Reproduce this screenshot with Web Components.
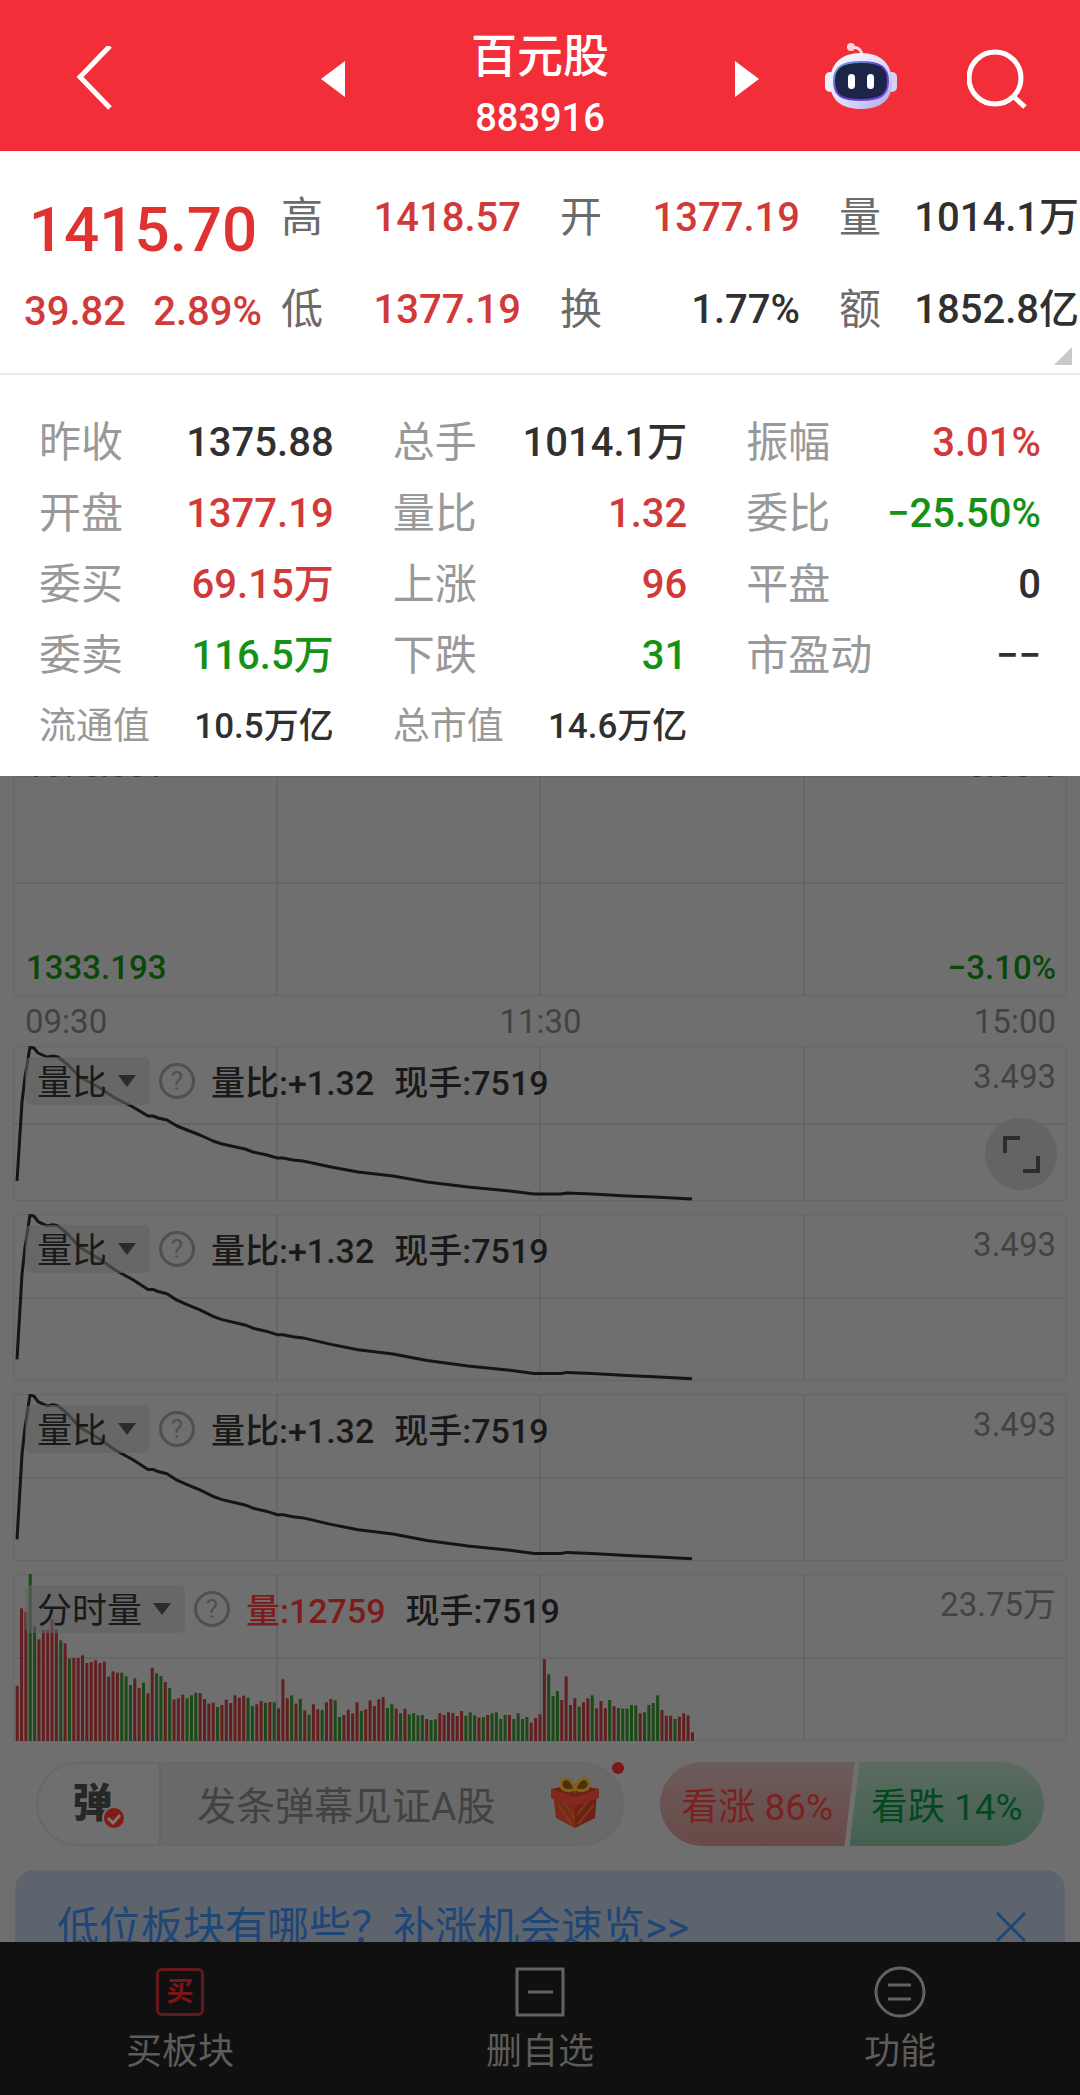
<!DOCTYPE html>
<html lang="zh-CN">
<head>
<meta charset="utf-8">
<meta name="viewport" content="width=device-width, initial-scale=1">
<title>百元股 883916</title>
<style>
    body {
        margin: 0;
        font-family: Roboto, "Noto Sans CJK SC", sans-serif;
        background: #6f6f6f;
    }
</style>
</head>
<body>
<stock-app>
    <stock-header slot="top" code="883916">百元股</stock-header>
    <quote-summary slot="top" price="1415.70" change="39.82" percent="2.89%">
        <quote-cell label="高" tone="up">1418.57</quote-cell>
        <quote-cell label="开" tone="up">1377.19</quote-cell>
        <quote-cell label="量">1014.1万</quote-cell>
        <quote-cell label="低" tone="up">1377.19</quote-cell>
        <quote-cell label="换">1.77%</quote-cell>
        <quote-cell label="额">1852.8亿</quote-cell>
    </quote-summary>
    <quote-details slot="top">
        <quote-cell label="昨收">1375.88</quote-cell>
        <quote-cell label="总手">1014.1万</quote-cell>
        <quote-cell label="振幅" tone="up">3.01%</quote-cell>
        <quote-cell label="开盘" tone="up">1377.19</quote-cell>
        <quote-cell label="量比" tone="up">1.32</quote-cell>
        <quote-cell label="委比" tone="down">−25.50%</quote-cell>
        <quote-cell label="委买" tone="up">69.15万</quote-cell>
        <quote-cell label="上涨" tone="up">96</quote-cell>
        <quote-cell label="平盘">0</quote-cell>
        <quote-cell label="委卖" tone="down">116.5万</quote-cell>
        <quote-cell label="下跌" tone="down">31</quote-cell>
        <quote-cell label="市盈动">−−</quote-cell>
        <quote-cell label="流通值" small>10.5万亿</quote-cell>
        <quote-cell label="总市值" small>14.6万亿</quote-cell>
    </quote-details>

    <price-chart></price-chart>
    <indicator-panel name="量比" max="3.493" kind="line" short>
        <span>量比:+1.32</span>
        <span>现手:7519</span>
        <expand-button slot="corner"></expand-button>
    </indicator-panel>
    <indicator-panel name="量比" max="3.493" kind="line">
        <span>量比:+1.32</span>
        <span>现手:7519</span>
    </indicator-panel>
    <indicator-panel name="量比" max="3.493" kind="line">
        <span>量比:+1.32</span>
        <span>现手:7519</span>
    </indicator-panel>
    <indicator-panel name="分时量" max="23.75万" kind="bars">
        <span style="color: #7c1c1c">量:12759</span>
        <span>现手:7519</span>
    </indicator-panel>
    <comment-bar></comment-bar>
    <tip-banner>低位板块有哪些？补涨机会速览&gt;&gt;</tip-banner>

    <bottom-nav slot="bottom"></bottom-nav>
</stock-app>

<script>
// Build a shadow root from a string of markup
function render(host, html) {
    const template = document.createElement("template");
    template.innerHTML = html;
    host.attachShadow({ mode: "open" }).appendChild(template.content.cloneNode(true));
}

// App shell: quote on top, charts that run under the nav, nav at the bottom
class StockApp extends HTMLElement {
    constructor() {
        super();
        render(this, `
<style>
    :host {
        display: flex;
        flex-direction: column;
        height: 100vh;
    }
    main {
        flex: 1;
        min-height: 0;
        overflow: hidden;
    }
</style>
<slot name="top"></slot>
<main><slot></slot></main>
<slot name="bottom"></slot>
`);
    }
}

class StockHeader extends HTMLElement {
    constructor() {
        super();
        render(this, `
<style>
    :host {
        display: grid;
        grid-template-columns: 1fr 438px 1fr;
        align-items: center;
        padding-top: 7px;
        background: #f22f38;
        color: #fff;
    }
    button {
        display: block;
        padding: 0;
        border: 0;
        background: none;
    }
    svg { display: block; }
    .back { margin-left: 76px; }
    .title {
        display: flex;
        align-items: center;
        justify-content: space-between;
    }
    .names {
        padding-top: 18px;
        padding-bottom: 2px;
        text-align: center;
        line-height: 62px;
    }
    h1 {
        margin: 0;
        font-size: 46px;
        font-weight: 500;
    }
    .code {
        font-size: 38px;
        font-weight: 500;
    }
    .tools {
        display: flex;
        align-items: center;
        justify-content: flex-end;
        gap: 70px;
        padding-right: 53px;
    }
</style>
<button class="back" aria-label="返回">
    <svg width="36" height="66" viewBox="0 0 36 66" fill="none" stroke="#fff" stroke-width="5"><path d="M34 0L4 31L34 62"/></svg>
</button>
<div class="title">
    <button aria-label="上一个"><svg width="24" height="36" viewBox="0 0 24 36"><path d="M24 0V36L0 18Z" fill="#fff"/></svg></button>
    <div class="names">
        <h1><slot></slot></h1>
        <div class="code"></div>
    </div>
    <button aria-label="下一个"><svg width="24" height="36" viewBox="0 0 24 36"><path d="M0 0V36L24 18Z" fill="#fff"/></svg></button>
</div>
<div class="tools">
    <button aria-label="助手">
        <svg width="72" height="76" viewBox="0 0 72 76">
            <defs>
                <linearGradient id="shell" x1="0" y1="0" x2="1" y2="1">
                    <stop offset="0" stop-color="#fff"/>
                    <stop offset=".55" stop-color="#dcdcfa"/>
                    <stop offset="1" stop-color="#a9a6e8"/>
                </linearGradient>
                <linearGradient id="rim" x1="0" y1="0" x2="1" y2="1">
                    <stop offset="0" stop-color="#78b4dc"/>
                    <stop offset=".5" stop-color="#5a3cc8"/>
                    <stop offset="1" stop-color="#7a4ae6"/>
                </linearGradient>
            </defs>
            <path d="M37 16C37 8 33 6 26 6" fill="none" stroke="#f8dfe6" stroke-width="3"/>
            <circle cx="26" cy="6" r="4" fill="#f9d3da"/>
            <rect x="0" y="31" width="10" height="20" rx="5" fill="#f1effb"/>
            <rect x="62" y="31" width="10" height="20" rx="5" fill="#d5d3f5"/>
            <path d="M36 12C56 12 67 23 67 41C67 59 56 68 36 68C16 68 5 59 5 41C5 23 16 12 36 12Z" fill="url(#shell)"/>
            <path d="M36 21C55 21 63 26 63 40C63 55 55 59 36 59C17 59 9 55 9 40C9 26 17 21 36 21Z" fill="#1c2547" stroke="url(#rim)" stroke-width="2"/>
            <rect x="23" y="33" width="7" height="15" rx="3.5" fill="#fff"/>
            <rect x="42" y="33" width="7" height="15" rx="3.5" fill="#fff"/>
        </svg>
    </button>
    <button aria-label="搜索">
        <svg width="60" height="60" viewBox="0 0 60 60" fill="none" stroke="#fff" stroke-width="5">
            <circle cx="28" cy="29" r="26"/><path d="M47 48L58 58"/>
        </svg>
    </button>
</div>
`);
        this.shadowRoot.querySelector(".code").textContent = this.getAttribute("code");
    }
}

// One label and its value, coloured by tone
class QuoteCell extends HTMLElement {
    constructor() {
        super();
        render(this, `
<style>
    :host {
        display: flex;
        justify-content: space-between;
        font-size: 40px;
        color: #303030;
        white-space: nowrap;
    }
    :host([tone="up"]) { color: #d13a38; }
    :host([tone="down"]) { color: #159215; }
    :host([small]) { font-size: 35px; }
    .label {
        font-size: 42px;
        font-weight: 400;
        color: var(--label-color, #999);
    }
    :host([small]) .label { font-size: 37px; }
    .value { font-weight: 500; }
</style>
<span class="label"></span>
<span class="value"><slot></slot></span>
`);
        this.shadowRoot.querySelector(".label").textContent = this.getAttribute("label");
    }
}

class QuoteSummary extends HTMLElement {
    constructor() {
        super();
        render(this, `
<style>
    :host {
        --label-color: #6b6b6b;
        position: relative;
        display: flex;
        gap: 19px;
        padding: 21px 1px 17px 24px;
        border-bottom: 2px solid #ebebeb;
        background: #fff;
        color: #d13a38;
        font-weight: 500;
    }
    .left { flex: 0 0 238px; }
    .price {
        font-size: 62px;
        line-height: 116px;
        text-align: center;
        color: #df3231;
    }
    .change {
        display: flex;
        justify-content: space-between;
        font-size: 40px;
        line-height: 48px;
    }
    .cells {
        flex: 1;
        display: grid;
        grid-template-columns: repeat(3, 1fr);
        column-gap: 39px;
        line-height: 92px;
    }
    /* fold mark in the corner */
    svg {
        position: absolute;
        right: 8px;
        bottom: 8px;
    }
</style>
<div class="left">
    <div class="price">${this.getAttribute("price")}</div>
    <div class="change"><span>${this.getAttribute("change")}</span><span>${this.getAttribute("percent")}</span></div>
</div>
<div class="cells"><slot></slot></div>
<svg width="18" height="18" viewBox="0 0 18 18"><path d="M18 0V18H0Z" fill="#c9c9c9"/></svg>
`);
    }
}

class QuoteDetails extends HTMLElement {
    constructor() {
        super();
        render(this, `
<style>
    :host {
        display: grid;
        grid-template-columns: repeat(3, 1fr);
        column-gap: 59px;
        padding: 32px 39px 14px;
        background: #fff;
        line-height: 71px;
    }
</style>
<slot></slot>
`);
    }
}

// Box with quarter lines and a middle line; the series is drawn over them
class PlotGrid extends HTMLElement {
    constructor() {
        super();
        const middle = this.getAttribute("middle") || "50%";
        render(this, `
<style>
    :host { display: block; }
    svg {
        display: block;
        width: 100%;
        height: 100%;
    }
    .grid {
        stroke: #666;
        stroke-width: 2;
        shape-rendering: crispEdges;
    }
</style>
<svg>
    <g class="grid">
        <rect x="0" y="0" width="100%" height="100%" fill="none"/>
        <line x1="25%" x2="25%" y1="0" y2="100%"/>
        <line x1="50%" x2="50%" y1="0" y2="100%"/>
        <line x1="75%" x2="75%" y1="0" y2="100%"/>
        <line x1="0" x2="100%" y1="${middle}" y2="${middle}"/>
    </g>
    ${series[this.getAttribute("kind")] || ""}
</svg>
`);
    }
}

// r = rise, g = fall, number = top of the bar on a floor of 513
const bars = `r347 r115 r125 g10 g168 r208 r180 r180 r148 r178 g211 r220 g266 r264 r264 r256 r279 r276 r271 r279
r275 r320 r304 r308 g308 g319 g345 r325 r354 g338 r370 r293 g310 g318 r336 g354 r388 r385 r374 g385
g376 g369 r369 r387 r401 r398 g411 r405 r389 r399 r376 r383 r377 g383 g408 r403 r393 g398 r396 g397
r415 r328 r385 g376 r401 g387 r421 g434 r403 r418 g420 r397 r387 g391 g441 r435 r419 r430 r397 g423
r418 r391 r408 r388 r381 g414 g403 r416 g430 r416 g433 g429 g436 g435 r447 g450 g448 r430 r435 r427
r429 r438 r423 g437 g427 g436 r443 g441 r435 g430 g427 g447 g435 r435 g447 g430 g447 g441 r458 r444
r433 r268 g313 g378 g363 r390 r319 r405 r385 g410 r397 r385 g376 r415 r393 r415 g390 r409 g414 g416
g416 g405 g406 r430 g427 g405 g399 g376 r420 r437 r437 g447 r440 r430 r436 r487`.split(/\s+/);

const series = {
    line: `
<svg viewBox="0 0 1054 155" preserveAspectRatio="none">
    <polyline fill="none" stroke="#151515" stroke-width="3" stroke-linejoin="round" vector-effect="non-scaling-stroke"
        points="4,135 9,56 12,31 17,1 21,2 25,7 34,11 40,10 45,11 54,18 67,31 87,42 102,52 120,61 135,70 140,70 145,72
        154,74 164,80 174,84 187,89 200,95 209,98 232,103 240,106 254,109 264,112 270,112 280,114 290,115 318,121
        345,126 380,130 414,136 455,141 497,145 521,148 548,148 554,147 579,148 614,150 641,151 679,153"/>
</svg>`,
    bars: `
<svg viewBox="0 12 3162 501" preserveAspectRatio="none">
    ${bars.map((bar, i) => {
        const top = Number(bar.slice(1));
        const color = bar[0] === "r" ? "#631f1f" : "#1c4a17";
        return `<rect x="${8 + i * 13.07}" y="${top}" width="9" height="${513 - top}" fill="${color}"/>`;
    }).join("")}
</svg>`
};

// Lower half of the intraday chart and its time axis
class PriceChart extends HTMLElement {
    constructor() {
        super();
        render(this, `
<style>
    :host {
        display: block;
        margin: 0 13px;
        font-size: 33px;
    }
    .plot { display: grid; }
    .plot > * { grid-area: 1 / 1; }
    plot-grid { height: 220px; }
    .scale {
        display: flex;
        flex-direction: column;
        justify-content: space-between;
        padding: 0 11px 8px 13px;
    }
    .row {
        display: flex;
        justify-content: space-between;
        line-height: 40px;
    }
    /* only the feet of this row show below the sheet */
    .cut {
        height: 4px;
        overflow: hidden;
        align-items: flex-end;
        line-height: 28px;
        color: #303030;
    }
    .low {
        color: #0a480a;
        font-weight: 500;
    }
    .times {
        display: grid;
        grid-template-columns: repeat(3, 1fr);
        padding: 2px 11px 0 12px;
        line-height: 48px;
        color: #424242;
    }
    .times :nth-child(2) { text-align: center; }
    .times :nth-child(3) { text-align: right; }
</style>
<div class="plot">
    <plot-grid middle="107"></plot-grid>
    <div class="scale">
        <div class="row cut"><span>1375.881</span><span>0.00%</span></div>
        <div class="row low"><span>1333.193</span><span>−3.10%</span></div>
    </div>
</div>
<div class="times"><span>09:30</span><span>11:30</span><span>15:00</span></div>
`);
    }
}

class IndicatorPanel extends HTMLElement {
    constructor() {
        super();
        render(this, `
<style>
    :host {
        position: relative;
        display: grid;
        margin: 0 13px 13px;
        font-size: 35px;
        color: #191919;
    }
    plot-grid, .bar { grid-area: 1 / 1; }
    plot-grid { height: 167px; }
    :host([short]) plot-grid { height: 155px; }
    .bar {
        display: flex;
        align-items: flex-start;
        padding: 11px 11px 0 12px;
        line-height: 48px;
    }
    label {
        display: flex;
        align-items: center;
        gap: 10px;
        padding: 0 14px 0 12px;
        border-radius: 6px;
        background: rgba(98, 98, 98, .6);
    }
    select {
        appearance: none;
        box-sizing: border-box;
        height: 48px;
        padding: 3px 0 0;
        border: 0;
        background: none;
        color: inherit;
        font: inherit;
    }
    .help {
        flex: none;
        box-sizing: border-box;
        width: 36px;
        height: 36px;
        margin: 6px 16px 0 9px;
        padding: 0;
        border: 3px solid #505050;
        border-radius: 50%;
        background: none;
        color: #505050;
        font: inherit;
        font-size: 26px;
        line-height: 30px;
    }
    .values {
        display: flex;
        gap: 20px;
        font-size: 34px;
        font-weight: 500;
        line-height: 52px;
    }
    .max {
        margin-left: auto;
        font-size: 33px;
        line-height: 40px;
        color: #434343;
    }
</style>
<plot-grid kind="${this.getAttribute("kind")}"></plot-grid>
<div class="bar">
    <label>
        <select aria-label="指标"><option>${this.getAttribute("name")}</option></select>
        <svg width="18" height="12" viewBox="0 0 18 12"><path d="M0 0H18L9 12Z" fill="#2b2b2b"/></svg>
    </label>
    <button class="help" aria-label="说明">?</button>
    <div class="values"><slot></slot></div>
    <span class="max">${this.getAttribute("max")}</span>
</div>
<slot name="corner"></slot>
`);
    }
}

// Floating button over the first panel
class ExpandButton extends HTMLElement {
    constructor() {
        super();
        render(this, `
<style>
    :host {
        position: absolute;
        right: 10px;
        bottom: 11px;
    }
    button {
        display: block;
        padding: 0;
        border: 0;
        border-radius: 50%;
        background: #646464;
    }
    svg { display: block; }
</style>
<button aria-label="全屏">
    <svg width="72" height="72" viewBox="0 0 72 72" fill="none" stroke="#2c2c2c" stroke-width="4">
        <path d="M20 35V20H35M53 38V53H38"/>
    </svg>
</button>
`);
    }
}

class CommentBar extends HTMLElement {
    constructor() {
        super();
        render(this, `
<style>
    :host {
        display: flex;
        gap: 36px;
        margin: 21px 36px 0;
        height: 84px;
    }
    button {
        padding: 0;
        border: 0;
        background: none;
        font: inherit;
    }
    .box {
        position: relative;
        flex: 1;
        min-width: 0;
        box-sizing: border-box;
        display: flex;
        border: 2px solid #686868;
        border-radius: 42px;
        background: #696969;
    }
    .toggle {
        flex: 0 0 123px;
        box-sizing: border-box;
        padding-right: 12px;
        border-right: 2px solid #646464;
        border-radius: 40px 0 0 40px;
        background: #6f6f6f;
        color: #272727;
        font-size: 40px;
        font-weight: 900;
        line-height: 76px;
    }
    .toggle span {
        position: relative;
        display: inline-block;
    }
    .toggle svg {
        position: absolute;
        right: -13px;
        bottom: 12px;
    }
    input {
        flex: 1;
        width: 0;
        min-width: 0;
        padding: 5px 0 0 36px;
        border: 0;
        background: none;
        color: #404040;
        font: inherit;
        font-size: 39px;
    }
    input::placeholder {
        color: #424242;
        opacity: 1;
    }
    .gift {
        flex: none;
        margin-right: 22px;
    }
    .dot {
        position: absolute;
        right: -2px;
        top: -2px;
        width: 12px;
        height: 12px;
        border-radius: 50%;
        background: #7c1818;
    }
    .votes {
        flex: 0 0 384px;
        display: flex;
        font-size: 37px;
    }
    .rise {
        flex: 1;
        margin-right: -5px;
        border-radius: 42px 0 0 42px;
        background: linear-gradient(#6b5c5b, #694a48);
        clip-path: polygon(0 0, 100% 0, calc(100% - 10px) 100%, 0 100%);
        color: #7b2220;
    }
    .fall {
        flex: 1;
        border-radius: 0 42px 42px 0;
        background: linear-gradient(#5c6b61, #426150);
        clip-path: polygon(10px 0, 100% 0, 100% 100%, 0 100%);
        color: #05481f;
    }
</style>
<div class="box">
    <button class="toggle"><span>弹<svg width="24" height="24" viewBox="0 0 24 24">
        <circle cx="12" cy="12" r="11" fill="#801b15" stroke="#6f6f6f" stroke-width="2"/>
        <path d="M6 12L11 17L18 9" fill="none" stroke="#7d7775" stroke-width="3"/>
    </svg></span></button>
    <input type="text" aria-label="弹幕" placeholder="发条弹幕见证A股">
    <button class="gift" aria-label="礼物">
        <svg width="50" height="54" viewBox="0 0 50 54">
            <path d="M3 18L25 26V53L6 43Z" fill="#7a291b"/>
            <path d="M47 18L25 26V53L45 43Z" fill="#6c2117"/>
            <path d="M8 30L22 50M14 27L25 44M28 49L44 30M27 40L39 25" stroke="#7d3a19" stroke-width="2"/>
            <path d="M1 14L25 17L49 14V23L25 31L1 23Z" fill="#80291c"/>
            <path d="M1 14L25 9L49 14L25 22Z" fill="#6d2217"/>
            <path d="M25 14C19 17 10 16 11 8C13 1 21 2 25 14C29 2 37 1 39 8C40 16 31 17 25 14Z" fill="#4b3010" stroke="#7f6118" stroke-width="3"/>
        </svg>
    </button>
    <span class="dot"></span>
</div>
<div class="votes">
    <button class="rise">看涨 86%</button>
    <button class="fall">看跌 14%</button>
</div>
`);
    }
}

class TipBanner extends HTMLElement {
    constructor() {
        super();
        render(this, `
<style>
    :host {
        display: flex;
        align-items: center;
        justify-content: space-between;
        margin: 24px 15px 0;
        padding: 0 39px 0 42px;
        border-radius: 20px;
        background: #5d646e;
        font-size: 42px;
        line-height: 112px;
    }
    a {
        padding-top: 2px;
        color: #1e4677;
        text-decoration: none;
    }
    button {
        padding: 0;
        border: 0;
        background: none;
    }
    svg { display: block; }
</style>
<a href="#"><slot></slot></a>
<button aria-label="关闭">
    <svg width="30" height="30" viewBox="0 0 30 30" stroke="#1e4677" stroke-width="3"><path d="M1 1L29 29M29 1L1 29"/></svg>
</button>
`);
    }
}

class BottomNav extends HTMLElement {
    constructor() {
        super();
        render(this, `
<style>
    :host {
        flex: none;
        display: grid;
        grid-template-columns: repeat(3, 1fr);
        padding: 24px 0 17px;
        background: #101010;
    }
    button {
        display: flex;
        flex-direction: column;
        align-items: center;
        gap: 8px;
        padding: 0;
        border: 0;
        background: none;
        color: #5c5c5c;
        font: inherit;
        font-size: 36px;
        line-height: 52px;
    }
    svg {
        fill: none;
        stroke: #626262;
        stroke-width: 3;
    }
    .buy {
        box-sizing: border-box;
        width: 48px;
        height: 48px;
        margin: 2px;
        border: 3px solid #641719;
        border-radius: 6px;
        color: #7a1518;
        font-size: 27px;
        font-weight: 700;
        line-height: 42px;
    }
</style>
<button><span class="buy">买</span>买板块</button>
<button>
    <svg width="52" height="52" viewBox="0 0 52 52"><path d="M3 3H49V49H3ZM14 26H39"/></svg>
    删自选
</button>
<button>
    <svg width="52" height="52" viewBox="0 0 52 52"><circle cx="26" cy="26" r="24"/><path d="M14 19H37M14 33H37"/></svg>
    功能
</button>
`);
    }
}

customElements.define("stock-app", StockApp);
customElements.define("stock-header", StockHeader);
customElements.define("quote-cell", QuoteCell);
customElements.define("quote-summary", QuoteSummary);
customElements.define("quote-details", QuoteDetails);
customElements.define("plot-grid", PlotGrid);
customElements.define("price-chart", PriceChart);
customElements.define("expand-button", ExpandButton);
customElements.define("indicator-panel", IndicatorPanel);
customElements.define("comment-bar", CommentBar);
customElements.define("tip-banner", TipBanner);
customElements.define("bottom-nav", BottomNav);
</script>
</body>
</html>
